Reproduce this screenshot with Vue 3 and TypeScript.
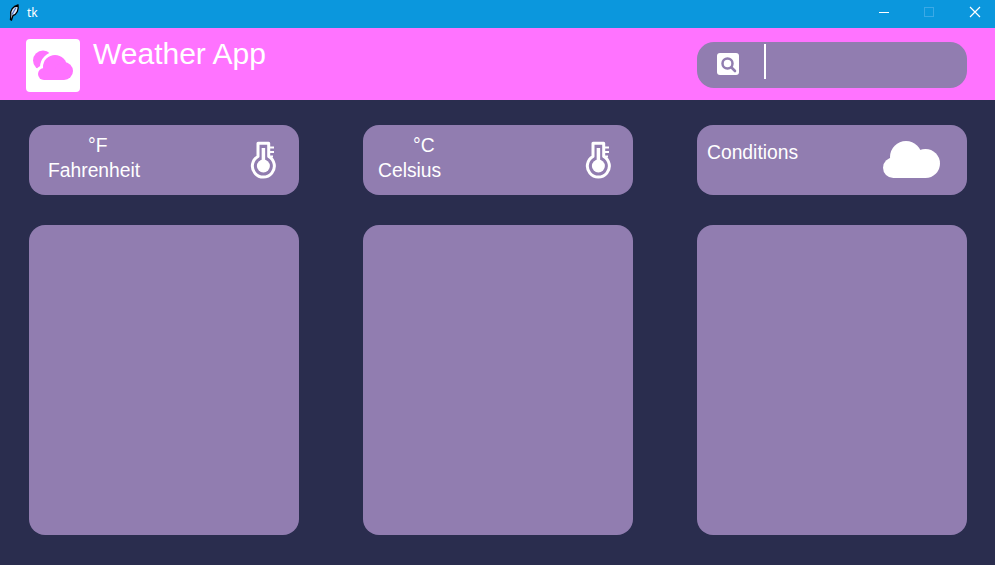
<template>
  <div class="window">
    <div class="titlebar">
      <svg class="feather" width="12" height="17" viewBox="0 0 12 17">
        <path d="M2.500 15.500 L2.800 11 C2 6.500 5 2 10 1 C11 5.500 9 10.500 5 11.500 L3.500 16 Z" fill="#dfe9fb" stroke="#000" stroke-width="1.300" />
        <path d="M4 10.500 L8 3.500" stroke="#4a6fc0" stroke-width="1.200" fill="none" />
      </svg>
      <span class="tk">tk</span>
      <div class="controls">
        <span class="ctl"><svg width="12" height="12" viewBox="0 0 12 12"><path d="M1 6.500 H11" stroke="#fff" stroke-width="1" /></svg></span>
        <span class="ctl"><svg width="12" height="12" viewBox="0 0 12 12"><rect x="1.500" y="1.500" width="9" height="9" fill="none" stroke="#3ba9e6" stroke-width="1" /></svg></span>
        <span class="ctl"><svg width="12" height="12" viewBox="0 0 12 12"><path d="M1 1 L11 11 M11 1 L1 11" stroke="#fff" stroke-width="1.200" /></svg></span>
      </div>
    </div>

    <header class="header">
      <div class="logo">
        <svg width="54" height="53" viewBox="0 0 54 53">
          <circle cx="17" cy="21.500" r="10" fill="#ff73ff" />
          <g fill="#fff" stroke="#fff" stroke-width="6">
            <circle cx="29" cy="28" r="12" />
            <circle cx="18" cy="35" r="6" />
            <circle cx="38" cy="32" r="9" />
          </g>
          <g fill="#ff73ff">
            <circle cx="29" cy="28" r="12" />
            <circle cx="18" cy="35" r="6" />
            <circle cx="38" cy="32" r="9" />
            <rect x="18" y="30" width="20" height="11" />
          </g>
        </svg>
      </div>
      <h1 class="title">Weather App</h1>
      <div class="search">
        <span class="search-icon">
          <svg width="22" height="22" viewBox="0 0 22 22">
            <circle cx="10.500" cy="10.500" r="5" fill="none" stroke="#917db0" stroke-width="2.500" />
            <path d="M14.500 14.500 L18 18" stroke="#917db0" stroke-width="2.600" stroke-linecap="round" />
          </svg>
        </span>
        <span class="cursor"></span>
      </div>
    </header>

    <main class="board">
      <div v-for="t in temps" :key="t.name" class="card small">
        <div class="label" :class="t.cls">
          <div class="unit">{{ t.unit }}</div>
          <div class="name">{{ t.name }}</div>
        </div>
        <svg class="thermo" :class="t.cls" width="27" height="40" viewBox="0 0 27 40">
          <path d="M8 3.200 H18.700 V16.500 A11 11 0 1 1 8 16.500 Z" fill="none" stroke="#fff" stroke-width="3" stroke-linejoin="round" />
          <circle cx="13.400" cy="26" r="6.500" fill="#fff" />
          <path d="M13.400 8 V24" stroke="#fff" stroke-width="3.500" />
          <path d="M19 7.500 H24 M19 12 H24 M19 16.500 H23" stroke="#fff" stroke-width="2" />
        </svg>
      </div>

      <div class="card small conditions">
        <div class="name">Conditions</div>
        <svg class="cloud" width="58" height="38" viewBox="0 0 58 38">
          <g fill="#fff">
            <circle cx="10.300" cy="26.700" r="10.300" />
            <circle cx="23" cy="16" r="16" />
            <circle cx="42.500" cy="22.500" r="14.500" />
            <rect x="10" y="20" width="33" height="17" />
          </g>
        </svg>
      </div>

      <div v-for="n in 3" :key="n" class="card big"></div>
    </main>
  </div>
</template>

<script setup lang="ts">
const temps = [
  { unit: '°F', name: 'Fahrenheit', cls: 'f' },
  { unit: '°C', name: 'Celsius', cls: 'c' },
]
</script>

<style scoped>
.window {
  width: 995px;
  height: 565px;
  display: flex;
  flex-direction: column;
  overflow: hidden;
  background: #2a2d4e;
  color: #fff;
  font-family: 'Liberation Sans', Arial, sans-serif;
}
.titlebar {
  height: 28px;
  flex: none;
  background: #0b97dd;
  display: flex;
  align-items: center;
  padding-left: 8px;
}
.feather {
  margin-top: -4px;
}
.tk {
  margin-left: 7px;
  margin-top: -3px;
  font-family: 'Noto Sans', sans-serif;
  font-size: 12px;
}
.controls {
  margin-left: auto;
  display: flex;
  margin-top: -4px;
  margin-right: -1px;
}
.ctl {
  width: 45px;
  height: 12px;
  display: flex;
  justify-content: center;
}
.ctl:last-child {
  padding-left: 3px;
  box-sizing: border-box;
}
.header {
  height: 72px;
  flex: none;
  background: #ff73ff;
  display: flex;
  align-items: flex-start;
  padding-left: 26px;
}
.logo {
  width: 54px;
  height: 53px;
  margin-top: 11px;
  background: #fff;
  border-radius: 4px;
}
.title {
  margin: 8px 0 0 13px;
  font-size: 30px;
  font-weight: 400;
  line-height: 36px;
}
.search {
  margin: 14px 28px 0 auto;
  width: 270px;
  height: 46px;
  border-radius: 17px;
  background: #917db0;
  display: flex;
  align-items: flex-start;
}
.search-icon {
  width: 22px;
  height: 22px;
  margin: 11px 0 0 20px;
  background: #fff;
  border-radius: 3px;
}
.cursor {
  width: 2px;
  height: 35px;
  margin: 2px 0 0 25px;
  background: #fff;
}
.board {
  display: grid;
  grid-template-columns: repeat(3, 270px);
  grid-template-rows: 70px 310px;
  column-gap: 64px;
  row-gap: 30px;
  padding: 25px 0 0 29px;
}
.card {
  background: #917db0;
  border-radius: 16px;
}
.small {
  display: flex;
  justify-content: space-between;
  align-items: flex-start;
}
.label {
  font-size: 19.300px;
  line-height: 22px;
  padding-top: 10px;
}
.label.f {
  margin-left: 19px;
}
.label.c {
  margin-left: 15px;
}
.label.f .unit {
  margin: 0 0 3px 40px;
}
.label.c .unit {
  margin: 0 0 3px 35px;
}
.thermo {
  margin: 15px 22px 0 0;
}
.thermo.c {
  margin-right: 21px;
}
.conditions .name {
  font-size: 19.300px;
  line-height: 22px;
  margin: 17px 0 0 10px;
}
.cloud {
  margin: 16px 26px 0 0;
}
</style>
